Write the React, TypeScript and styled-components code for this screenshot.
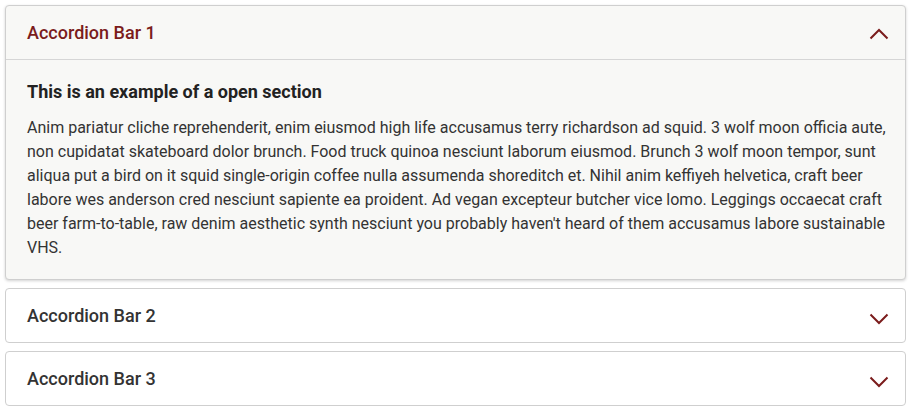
import { useState } from 'react';
import styled, { createGlobalStyle } from 'styled-components';

const Global = createGlobalStyle`
  body {
    margin: 0;
    padding: 5px 6px 5px 5px;
    background: #fff;
    font-family: Roboto, 'Liberation Sans', sans-serif;
  }
`;

const List = styled.div`
  display: flex;
  flex-direction: column;
  gap: 8px;
`;

const Item = styled.div<{ open: boolean }>`
  border: 1px solid #cfcfcf;
  border-radius: 4px;
  background: ${(p) => (p.open ? '#f8f8f6' : '#fff')};
  box-shadow: ${(p) => (p.open ? '0 1px 3px rgba(0, 0, 0, 0.18)' : 'none')};
  overflow: hidden;
`;

const Header = styled.button<{ open: boolean }>`
  display: flex;
  align-items: center;
  justify-content: space-between;
  width: 100%;
  height: ${(p) => (p.open ? '54px' : '53px')};
  padding: 0 16px 0 21px;
  border: none;
  border-bottom: ${(p) => (p.open ? '1px solid #d6d6d6' : 'none')};
  background: transparent;
  font-family: inherit;
  font-size: 18px;
  font-weight: 500;
  color: ${(p) => (p.open ? '#7b1c1c' : '#333')};
  cursor: pointer;
  text-align: left;
`;

const Chevron = styled.svg<{ open: boolean }>`
  width: 20px;
  height: 12px;
  margin-top: ${(p) => (p.open ? '2px' : '6px')};
  transform: ${(p) => (p.open ? 'rotate(180deg)' : 'none')};
`;

const Body = styled.div`
  padding: 20px 16px 19px 21px;
  color: #333;
`;

const Heading = styled.h3`
  margin: 0 0 12px;
  font-size: 18px;
  font-weight: 700;
  line-height: 24px;
  color: #222;
`;

const Para = styled.p`
  margin: 0;
  font-size: 16px;
  line-height: 24px;
`;

const text =
  "Anim pariatur cliche reprehenderit, enim eiusmod high life accusamus terry richardson ad squid. 3 wolf moon officia aute, non cupidatat skateboard dolor brunch. Food truck quinoa nesciunt laborum eiusmod. Brunch 3 wolf moon tempor, sunt aliqua put a bird on it squid single-origin coffee nulla assumenda shoreditch et. Nihil anim keffiyeh helvetica, craft beer labore wes anderson cred nesciunt sapiente ea proident. Ad vegan excepteur butcher vice lomo. Leggings occaecat craft beer farm-to-table, raw denim aesthetic synth nesciunt you probably haven't heard of them accusamus labore sustainable VHS.";

export default function App() {
  const [open, setOpen] = useState(0);
  const bars = ['Accordion Bar 1', 'Accordion Bar 2', 'Accordion Bar 3'];

  return (
    <>
      <Global />
      <List>
        {bars.map((title, i) => {
          const isOpen = open === i;
          return (
            <Item key={title} open={isOpen}>
              <Header open={isOpen} onClick={() => setOpen(isOpen ? -1 : i)}>
                {title}
                <Chevron open={isOpen} viewBox="0 0 20 12">
                  <path d="M1.5 1.5 L10 10 L18.5 1.5" fill="none" stroke="#7b1c1c" strokeWidth="2" />
                </Chevron>
              </Header>
              {isOpen && (
                <Body>
                  <Heading>This is an example of a open section</Heading>
                  <Para>{text}</Para>
                </Body>
              )}
            </Item>
          );
        })}
      </List>
    </>
  );
}
